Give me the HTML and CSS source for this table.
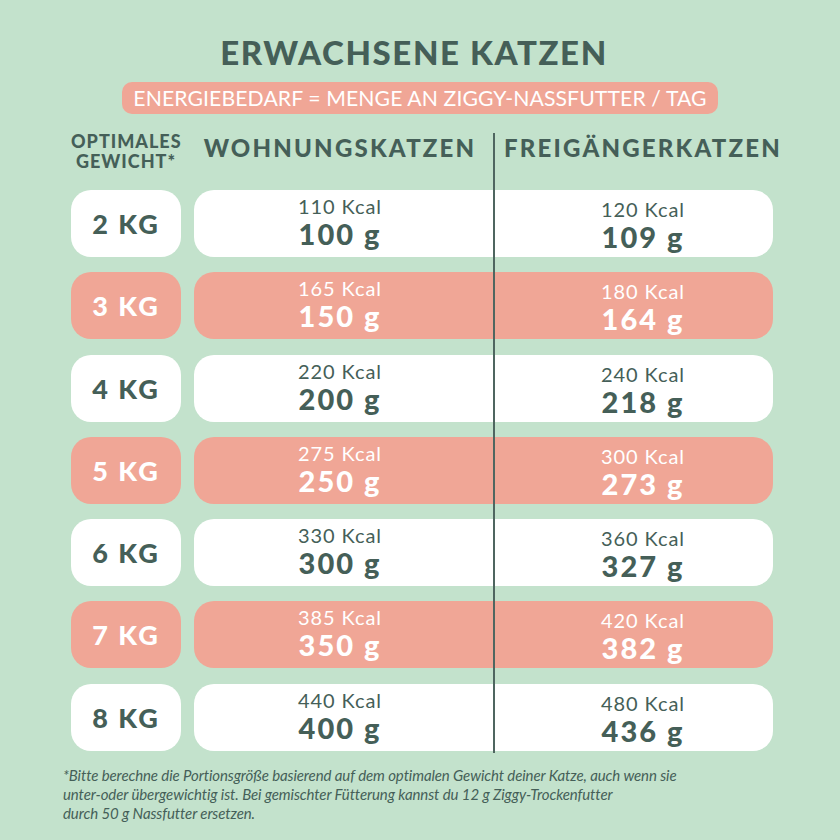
FILE: index.html
```html
<!DOCTYPE html>
<html lang="de">
<head>
<meta charset="utf-8">
<link rel="stylesheet" href="styles.css">
</head>
<body>
<div class="page">
  <h1 class="title">ERWACHSENE KATZEN</h1>
  <div class="pill-wrap"><span class="pill">ENERGIEBEDARF = MENGE AN ZIGGY-NASSFUTTER / TAG</span></div>
  <div class="table">
    <div class="divider"></div>
    <div class="head">
      <div class="h-weight">OPTIMALES<br>GEWICHT*</div>
      <div class="h-cols">
        <div class="h-col">WOHNUNGSKATZEN</div>
        <div class="h-col">FREIGÄNGERKATZEN</div>
      </div>
    </div>
    <div class="row">
      <div class="weight">2 KG</div>
      <div class="main"><div class="cell"><span class="kcal">110 Kcal</span><span class="gram">100 g</span></div><div class="cell right"><span class="kcal">120 Kcal</span><span class="gram">109 g</span></div></div>
    </div>
    <div class="row alt">
      <div class="weight">3 KG</div>
      <div class="main"><div class="cell"><span class="kcal">165 Kcal</span><span class="gram">150 g</span></div><div class="cell right"><span class="kcal">180 Kcal</span><span class="gram">164 g</span></div></div>
    </div>
    <div class="row">
      <div class="weight">4 KG</div>
      <div class="main"><div class="cell"><span class="kcal">220 Kcal</span><span class="gram">200 g</span></div><div class="cell right"><span class="kcal">240 Kcal</span><span class="gram">218 g</span></div></div>
    </div>
    <div class="row alt">
      <div class="weight">5 KG</div>
      <div class="main"><div class="cell"><span class="kcal">275 Kcal</span><span class="gram">250 g</span></div><div class="cell right"><span class="kcal">300 Kcal</span><span class="gram">273 g</span></div></div>
    </div>
    <div class="row">
      <div class="weight">6 KG</div>
      <div class="main"><div class="cell"><span class="kcal">330 Kcal</span><span class="gram">300 g</span></div><div class="cell right"><span class="kcal">360 Kcal</span><span class="gram">327 g</span></div></div>
    </div>
    <div class="row alt">
      <div class="weight">7 KG</div>
      <div class="main"><div class="cell"><span class="kcal">385 Kcal</span><span class="gram">350 g</span></div><div class="cell right"><span class="kcal">420 Kcal</span><span class="gram">382 g</span></div></div>
    </div>
    <div class="row">
      <div class="weight">8 KG</div>
      <div class="main"><div class="cell"><span class="kcal">440 Kcal</span><span class="gram">400 g</span></div><div class="cell right"><span class="kcal">480 Kcal</span><span class="gram">436 g</span></div></div>
    </div>
  </div>
  <p class="note">*Bitte berechne die Portionsgröße basierend auf dem optimalen Gewicht deiner Katze, auch wenn sie<br>unter-oder übergewichtig ist. Bei gemischter Fütterung kannst du 12 g Ziggy-Trockenfutter<br>durch 50 g Nassfutter ersetzen.</p>
</div>
</body>
</html>
```
FILE: styles.css
```css
* { box-sizing: border-box; }
html, body { margin: 0; padding: 0; }
body {
  width: 840px;
  height: 840px;
  background: #c3e2cc;
  font-family: Lato, "Liberation Sans", sans-serif;
  color: #455f58;
  overflow: hidden;
}
.page {
  padding-top: 34px;
}
.title {
  margin: 0;
  text-align: center;
  font-size: 33px;
  font-weight: 900;
  letter-spacing: 1.6px;
  line-height: 36px;
  padding-right: 12px;
}
.pill-wrap {
  text-align: center;
  margin-top: 12px;
}
.pill {
  display: inline-block;
  background: #f0a696;
  color: #fff;
  font-size: 21.2px;
  font-weight: 400;
  line-height: 32px;
  padding: 0 11px;
  border-radius: 10px;
  letter-spacing: 0.1px;
}
.table {
  position: relative;
  margin-top: 16px;
  padding-left: 71px;
}
.divider {
  position: absolute;
  left: 493px;
  top: 3px;
  width: 2px;
  height: 620px;
  background: #4f6660;
  z-index: 2;
}
.head {
  display: grid;
  grid-template-columns: 110px 579px;
  column-gap: 13px;
  height: 60px;
  align-items: start;
}
.h-weight {
  text-align: center;
  font-size: 18px;
  font-weight: 900;
  line-height: 20px;
  letter-spacing: 1px;
  padding-top: 1px;
  white-space: nowrap;
}
.h-cols {
  display: grid;
  grid-template-columns: 292px 260px;
  column-gap: 27px;
}
.h-col {
  display: flex;
  justify-content: center;
  white-space: nowrap;
  font-size: 24px;
  font-weight: 900;
  letter-spacing: 2.2px;
  line-height: 28px;
  padding-top: 4px;
}
.row {
  display: grid;
  grid-template-columns: 110px 579px;
  column-gap: 13px;
  height: 67px;
  margin-bottom: 15.3px;
}
.weight {
  background: #fff;
  border-radius: 20px;
  display: flex;
  align-items: center;
  justify-content: center;
  font-size: 27px;
  font-weight: 900;
  letter-spacing: 2px;
}
.main {
  background: #fff;
  border-radius: 20px;
  display: grid;
  grid-template-columns: 292px 260px;
  column-gap: 27px;
}
.cell {
  display: flex;
  flex-direction: column;
  align-items: center;
  justify-content: center;
  padding-bottom: 3px;
}
.cell.right { padding-top: 3px; padding-bottom: 0; }
.kcal {
  font-size: 20px;
  font-weight: 400;
  line-height: 24px;
  letter-spacing: 0.9px;
}
.gram {
  font-size: 29px;
  font-weight: 900;
  line-height: 32px;
  letter-spacing: 2px;
}
.row.alt .weight,
.row.alt .main {
  background: #f0a696;
  color: #fff;
}
.note {
  margin: 0;
  margin-top: 10px;
  padding-left: 63px;
  font-size: 15px;
  font-style: italic;
  line-height: 19px;
  letter-spacing: -0.1px;
}
```
